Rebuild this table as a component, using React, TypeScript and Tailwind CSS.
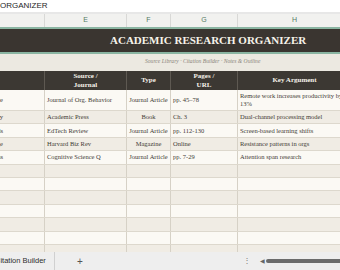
import React from "react";

type Row = {
    lead: string;
    source: string;
    type: string;
    pages: string;
    argument: string;
};

const rows: Row[] = [
    { lead: "Remote Work Culture", source: "Journal of Org. Behavior", type: "Journal Article", pages: "pp. 45–78", argument: "Remote work increases productivity by 13%" },
    { lead: "Dual Process Theory", source: "Academic Press", type: "Book", pages: "Ch. 3", argument: "Dual-channel processing model" },
    { lead: "Screen Learning Trends", source: "EdTech Review", type: "Journal Article", pages: "pp. 112-130", argument: "Screen-based learning shifts" },
    { lead: "Leading Change", source: "Harvard Biz Rev", type: "Magazine", pages: "Online", argument: "Resistance patterns in orgs" },
    { lead: "Attention Spans", source: "Cognitive Science Q", type: "Journal Article", pages: "pp. 7-29", argument: "Attention span research" },
];

const serif = "font-['Liberation_Serif','Times_New_Roman',serif]";
const sans = "font-['Liberation_Sans',Arial,sans-serif]";

function ColumnLetters() {
    const cols = [
        { w: "w-[45px]", label: "" },
        { w: "w-[82px]", label: "E" },
        { w: "w-[44px]", label: "F" },
        { w: "w-[67px]", label: "G" },
        { w: "w-[114px]", label: "H" },
    ];
    return (
        <div className={`flex h-[13px] shrink-0 bg-[#f1f1ef] text-[7px] text-[#557a64] ${sans}`}>
            {cols.map((c, i) => (
                <div key={i} className={`${c.w} flex shrink-0 items-center justify-center border-r border-[#d8d8d6]`}>
                    {c.label}
                </div>
            ))}
        </div>
    );
}

function HeaderRow() {
    const cell = "flex shrink-0 flex-col items-center justify-center border-r border-[#5e5952] leading-[9px]";
    return (
        <div className={`flex h-[19px] shrink-0 bg-[#3c3833] text-[7px] font-bold text-[#f6f2ea] ${serif}`}>
            <div className={`${cell} w-[45px]`} />
            <div className={`${cell} w-[82px]`}>
                <span>Source /</span>
                <span>Journal</span>
            </div>
            <div className={`${cell} w-[44px]`}>Type</div>
            <div className={`${cell} w-[67px]`}>
                <span>Pages /</span>
                <span>URL</span>
            </div>
            <div className={`${cell} w-[114px]`}>Key Argument</div>
        </div>
    );
}

function DataRow({ row, index }: { row?: Row; index: number }) {
    const bg = index % 2 === 0 ? "bg-[#fbf9f4]" : "bg-[#f0ece4]";
    const height = index === 0 ? "h-[21px]" : "h-[13.4px]";
    const cell = "flex shrink-0 items-center overflow-hidden border-r border-[#d6d1c6]";
    return (
        <div className={`flex ${height} shrink-0 border-b border-[#ddd8cd] ${bg} text-[6.5px] text-[#3f3b35] ${serif}`}>
            <div className={`${cell} w-[45px] justify-end pr-[41px] whitespace-nowrap`}>{row?.lead}</div>
            <div className={`${cell} w-[82px] px-[2px] whitespace-nowrap`}>{row?.source}</div>
            <div className={`${cell} w-[44px] justify-center whitespace-nowrap`}>{row?.type}</div>
            <div className={`${cell} w-[67px] px-[2px] whitespace-nowrap`}>{row?.pages}</div>
            <div className={`${cell} w-[114px] px-[2px] leading-[8px]`}>{row?.argument}</div>
        </div>
    );
}

export default function App() {
    const blanks = Array.from({ length: 8 });
    return (
        <div className="flex h-[270px] w-[340px] flex-col overflow-hidden bg-white">
            <div className={`flex h-[12px] shrink-0 items-center bg-white text-[8px] text-[#262626] ${sans}`}>
                ORGANIZER
            </div>
            <div className="h-[2px] shrink-0 bg-[#e7e7e7]" />
            <div className="w-[352px] shrink-0">
                <ColumnLetters />
            </div>
            <div className="h-[2px] shrink-0 bg-[#8ab5a2]" />
            <div className={`flex h-[23px] w-[352px] shrink-0 items-center bg-[#3a3530] pl-[110px] text-[11px] font-bold whitespace-nowrap text-[#f7f3ea] ${serif}`}>
                ACADEMIC RESEARCH ORGANIZER
            </div>
            <div className="h-[2px] shrink-0 bg-[#8ab5a2]" />
            <div className={`flex h-[17px] shrink-0 items-start bg-[#ece9e1] pt-[3px] pl-[145px] text-[5.6px] italic whitespace-nowrap text-[#8a8479] ${serif}`}>
                Source Library · Citation Builder · Notes &amp; Outline
            </div>
            <div className="flex w-[352px] flex-1 flex-col overflow-hidden">
                <HeaderRow />
                {rows.map((r, i) => (
                    <DataRow key={i} row={r} index={i} />
                ))}
                {blanks.map((_, i) => (
                    <DataRow key={`b${i}`} index={i + rows.length} />
                ))}
            </div>
            <div className={`flex h-[18px] shrink-0 items-center bg-[#eeeeee] text-[7.5px] text-[#2e2e2e] ${sans}`}>
                <div className="flex h-full w-[55px] shrink-0 items-center overflow-hidden border-r border-[#d0d0d0]">
                    <span className="-ml-[5px] font-medium whitespace-nowrap">Citation Builder</span>
                </div>
                <span className="ml-[22px] text-[10px] font-light text-[#555]">+</span>
                <span className="ml-[160px] text-[8px] text-[#777]">⋮</span>
                <span className="ml-[9px] text-[6px] text-[#666]">◀</span>
                <div className="ml-[1px] h-[4px] flex-1 rounded-l-full bg-[#6b6b6b]" />
            </div>
        </div>
    );
}
